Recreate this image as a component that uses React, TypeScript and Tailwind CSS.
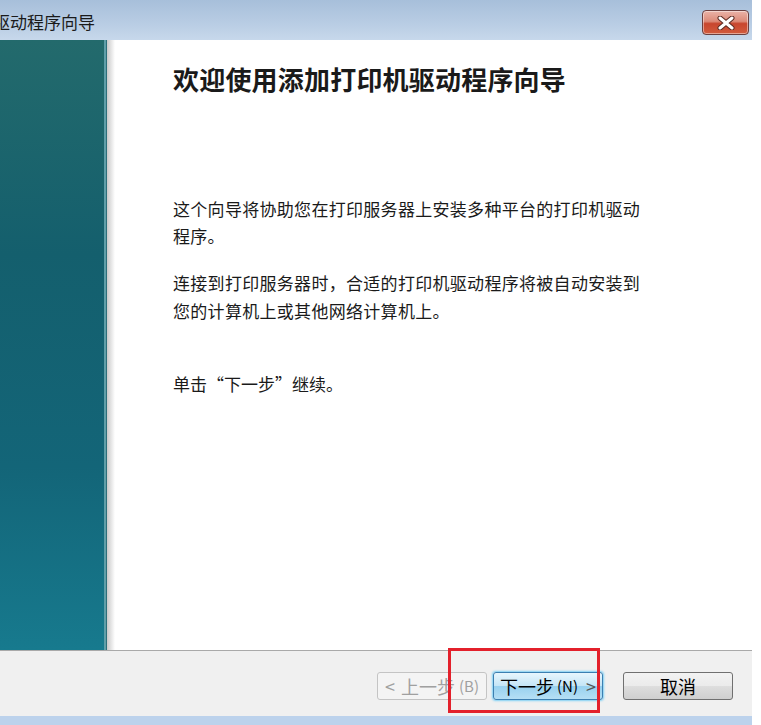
const font = "font-['Noto_Sans_CJK_SC','Noto_Sans',sans-serif]";

function CloseButton() {
  return (
    <div className="mr-[3px] mt-[10px] flex h-[25px] w-[47px] items-center justify-center rounded-[4px] border border-[#6b4040] bg-[linear-gradient(to_bottom,#eab3a8_0%,#dc8a78_45%,#c8462e_55%,#d25c3e_100%)] shadow-[inset_0_0_0_1px_rgba(255,255,255,0.45)]">
      <svg width="18" height="14" viewBox="0 0 18 14">
        <path d="M3 2 L15 12 M15 2 L3 12" stroke="#5a2a22" strokeWidth="5" strokeLinecap="round" />
        <path d="M3 2 L15 12 M15 2 L3 12" stroke="#ffffff" strokeWidth="3" strokeLinecap="round" />
      </svg>
    </div>
  );
}

function WizardButton(props: { children: React.ReactNode; variant?: "disabled" | "default" | "primary" }) {
  const v = props.variant ?? "default";
  const cls =
    v === "disabled"
      ? "border-[#c4c4c4] bg-[#f4f4f4] text-[#a0a0a0]"
      : v === "primary"
        ? "border-[#3c7fb1] bg-[linear-gradient(to_bottom,#e8f6fd_0%,#c4e5f6_50%,#98d1ef_52%,#b5dff5_100%)] text-black shadow-[0_0_2px_1px_#7fd0f5]"
        : "border-[#707070] bg-[linear-gradient(to_bottom,#f2f2f2_0%,#ebebeb_50%,#dddddd_52%,#cfcfcf_100%)] text-black";
  return (
    <div className={`flex h-[28px] w-[110px] items-center justify-center rounded-[3px] border text-[18px] ${cls}`}>
      {props.children}
    </div>
  );
}

export default function App() {
  return (
    <div className={`relative h-[725px] w-[761px] overflow-hidden bg-white ${font}`}>
      <div className="flex h-[725px] w-[752px] flex-col">
        {/* title bar */}
        <div className="flex h-[40px] justify-between bg-[linear-gradient(to_bottom,#a7bfda_0%,#b9cde4_60%,#c7d8eb_100%)]">
          <div className="ml-[-7px] mt-[9px] text-[17px] leading-[26px] text-[#1a1a1a]">驱动程序向导</div>
          <CloseButton />
        </div>

        {/* body */}
        <div className="flex h-[610px]">
          <div className="flex w-[107px] bg-[linear-gradient(to_bottom,#236a6c_0%,#145f6d_35%,#136578_70%,#177a8e_100%)]">
            <div className="flex-1" />
            <div className="w-[2px] bg-[#5f9ea8]" />
            <div className="w-[1px] bg-[#2c6f7a]" />
          </div>
          <div className="w-[8px] bg-[linear-gradient(to_right,#c9c9c9,#ffffff)]" />
          <div className="flex-1 bg-white pl-[58px] text-[#1a1a1a]">
            <div className="mt-[22px] text-[26px] font-bold leading-[34px] tracking-[0.2px]">欢迎使用添加打印机驱动程序向导</div>
            <div className="mt-[99px] w-[480px] text-[17px] leading-[27px] tracking-[0.3px]">
              这个向导将协助您在打印服务器上安装多种平台的打印机驱动程序。
            </div>
            <div className="mt-[20px] w-[480px] text-[17px] leading-[28px] tracking-[0.3px]">
              连接到打印服务器时，合适的打印机驱动程序将被自动安装到您的计算机上或其他网络计算机上。
            </div>
            <div className="mt-[45px] text-[17px] leading-[27px]">单击“下一步”继续。</div>
          </div>
        </div>

        {/* footer */}
        <div className="h-[1px] bg-[#a9a9a9]" />
        <div className="flex h-[65px] items-start justify-end bg-[#f0f0f0] pr-[19px] pt-[21px]">
          <WizardButton variant="disabled">
            <span className="mr-[6px]">&lt;</span>上一步<span className="ml-[4px] text-[15px]">(B)</span>
          </WizardButton>
          <div className="w-[6px]" />
          <WizardButton variant="primary">
            下一步<span className="ml-[3px] text-[15px]">(N)</span>
            <span className="ml-[8px] text-[#555]">&gt;</span>
          </WizardButton>
          <div className="w-[20px]" />
          <WizardButton>取消</WizardButton>
        </div>
        <div className="h-[9px] bg-[#bcd2ec]" />
      </div>

      {/* red annotation box */}
      <div className="absolute left-[448px] top-[648px] h-[65px] w-[152px] border-[3px] border-[#e3202b]" />
    </div>
  );
}
